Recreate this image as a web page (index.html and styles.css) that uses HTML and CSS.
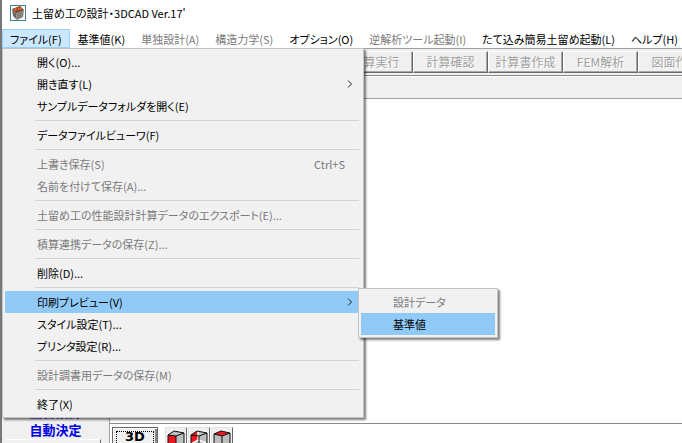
FILE: index.html
```html
<!DOCTYPE html>
<html lang="ja">
<head>
<meta charset="utf-8">
<title>土留め工の設計・3DCAD Ver.17</title>
<link rel="stylesheet" href="styles.css">
</head>
<body>
<div class="window">
  <header class="titlebar">
    <svg class="app-icon" viewBox="0 0 16 16" aria-hidden="true">
      <rect x=".5" y=".5" width="15" height="15" fill="#fff" stroke="#3f8488"/>
      <path d="M2 4 6 8 7 15 3 11Z" fill="#6b6764"/>
      <path d="M6 8 14 5 13 12 7 15Z" fill="#85807a"/>
      <path d="M2 4 10 1 14 5 6 8Z" fill="#713a25"/>
      <path d="M4 4 6 6M6 3 8 6M8 2 10 5M10 2 12 4" stroke="#e2572b" stroke-width="1.2"/>
      <path d="M5 4h1M8 4h1M10 4h1" stroke="#f0ae55"/>
    </svg>
    <h1 class="title">土留め工の設計・3DCAD Ver.17'</h1>
  </header>

  <nav class="menubar">
    <button class="menubar-item open">ファイル(F)</button>
    <button class="menubar-item">基準値(K)</button>
    <button class="menubar-item" disabled>単独設計(A)</button>
    <button class="menubar-item" disabled>構造力学(S)</button>
    <button class="menubar-item">オプション(O)</button>
    <button class="menubar-item" disabled>逆解析ツール起動(I)</button>
    <button class="menubar-item">たて込み簡易土留め起動(L)</button>
    <button class="menubar-item">ヘルプ(H)</button>
  </nav>

  <div class="toolbar">
    <button class="tool" disabled>計算実行</button>
    <button class="tool" disabled>計算確認</button>
    <button class="tool" disabled>計算書作成</button>
    <button class="tool" disabled>FEM解析</button>
    <button class="tool" disabled>図面作成</button>
  </div>
  <div class="caption-bar"></div>

  <main class="workspace">
    <aside class="side">
      <p class="side-title">土留設計<br>自動決定</p>
      <div class="side-box"></div>
    </aside>
    <section class="view">
      <div class="canvas"></div>
      <div class="viewbar">
        <button class="view-3d"><span class="focus">3D</span></button>
        <div class="cubes">
          <button class="cube" aria-label="正面">
            <svg viewBox="0 0 18 18"><path d="M1 5 7 1 17 3V13L9 17 1 15Z" fill="#bbc0bf"/><path d="M1 5 9 6V17L1 15Z" fill="#ec1720"/><path d="M1 5 7 1 17 3V13L9 17 1 15V5L9 6 17 3M9 6V17" fill="none" stroke="#111"/></svg>
          </button>
          <button class="cube" aria-label="背面">
            <svg viewBox="0 0 18 18"><path d="M1 5 7 1 17 3V13L9 17 1 15Z" fill="#bbc0bf"/><path d="M1 5 7 1 9 6V10L1 13Z" fill="#ec1720"/><path d="M1 14 8 10 17 13M8 1V10" fill="none" stroke="#fff" stroke-width="1.500"/><path d="M1 5 7 1 17 3V13L9 17 1 15V5L9 6 17 3M9 6V17" fill="none" stroke="#111"/></svg>
          </button>
          <button class="cube" aria-label="上面">
            <svg viewBox="0 0 18 18"><path d="M1 4 8 1 17 3V13L9 17 1 15Z" fill="#bbc0bf"/><path d="M1 4 8 1 17 3 9 6Z" fill="#ec1720"/><path d="M1 4 8 1 17 3V13L9 17 1 15V4L9 6 17 3M9 6V17" fill="none" stroke="#111"/></svg>
          </button>
        </div>
      </div>
    </section>
  </main>

  <div class="popup file-menu" role="menu">
    <button class="item" role="menuitem">開く(O)...</button>
    <button class="item" role="menuitem">開き直す(L)<svg class="arrow" viewBox="0 0 6 8"><path d="M1 .5 4.500 4 1 7.500"/></svg></button>
    <button class="item" role="menuitem">サンプルデータフォルダを開く(E)</button>
    <hr class="sep">
    <button class="item" role="menuitem">データファイルビューワ(F)</button>
    <hr class="sep">
    <button class="item" role="menuitem" disabled>上書き保存(S)<span class="shortcut">Ctrl+S</span></button>
    <button class="item" role="menuitem" disabled>名前を付けて保存(A)...</button>
    <hr class="sep">
    <button class="item" role="menuitem" disabled>土留め工の性能設計計算データのエクスポート(E)...</button>
    <hr class="sep">
    <button class="item" role="menuitem" disabled>積算連携データの保存(Z)...</button>
    <hr class="sep">
    <button class="item" role="menuitem">削除(D)...</button>
    <hr class="sep">
    <div class="has-sub">
      <button class="item active" role="menuitem">印刷プレビュー(V)<svg class="arrow" viewBox="0 0 6 8"><path d="M1 .5 4.500 4 1 7.500"/></svg></button>
      <div class="popup sub-menu" role="menu">
        <button class="item" role="menuitem" disabled>設計データ</button>
        <button class="item active" role="menuitem">基準値</button>
      </div>
    </div>
    <button class="item" role="menuitem">スタイル設定(T)...</button>
    <button class="item" role="menuitem">プリンタ設定(R)...</button>
    <hr class="sep">
    <button class="item" role="menuitem" disabled>設計調書用データの保存(M)</button>
    <hr class="sep">
    <button class="item" role="menuitem">終了(X)</button>
  </div>
</div>
</body>
</html>
```
FILE: styles.css
```css
* { box-sizing: border-box; }

body {
  margin: 0;
  background: #fff;
  color: #000;
  font: 11px/20px "Noto Sans CJK JP", sans-serif;
  font-feature-settings: "palt";
}

button {
  margin: 0;
  padding: 0;
  border: 0;
  background: none;
  color: inherit;
  font: inherit;
  font-feature-settings: inherit;
  white-space: nowrap;
}

.window {
  position: relative;
  display: flex;
  flex-direction: column;
  height: 100vh;
  overflow: hidden;
  border-left: 2px solid #777;
}

.titlebar {
  display: flex;
  align-items: center;
  gap: 6px;
  height: 29px;
  padding: 0 8px 3px;
}

.app-icon { width: 16px; height: 16px; }

.title { margin: 0; font-size: 11px; font-weight: 400; }

.menubar { display: flex; height: 19px; }

.menubar-item { padding: 0 8px; line-height: 18px; }
.menubar-item.open { background: #cce8ff; box-shadow: inset 0 0 0 1px #99d1ff; }
.menubar-item:disabled { color: #7a7a7a; }

.toolbar {
  display: flex;
  height: 28px;
  padding: 2px 0 2px 336px;
  border-top: 1px solid #a0a0a0;
  border-bottom: 1px solid #888;
  background: #f0f0f0;
}

.tool {
  flex: none;
  width: 75px;
  height: 22px;
  border: 1px solid;
  border-color: #fff #696969 #696969 #fff;
  box-shadow: inset -1px -1px #a8a8a8;
  background: #f0f0f0;
  font-size: 12px;
  line-height: 20px;
}
.tool:disabled { color: #a0a0a0; text-shadow: 1px 1px #fff; }

.caption-bar {
  height: 23px;
  border-top: 1px solid #fff;
  border-bottom: 1px solid #a0a0a0;
  background: #f0f0f0;
}

.workspace { display: flex; flex: 1; min-height: 0; }

.side {
  display: flex;
  flex-direction: column;
  justify-content: flex-end;
  width: 108px;
  border-right: 1px solid #a0a0a0;
  background: #f0f0f0;
}

.side-title {
  margin: 0;
  color: #0000e0;
  font-size: 13px;
  font-weight: 700;
  line-height: 18px;
  text-align: center;
}

.side-box {
  height: 4px;
  margin: 0 8px 0 4px;
  border-top: 1px solid #fff;
  border-right: 1px solid #696969;
}

.view { display: flex; flex: 1; flex-direction: column; }
.canvas { flex: 1; }

.viewbar {
  display: flex;
  gap: 7px;
  height: 20px;
  padding: 3px 2px 0;
  border-top: 1px solid #888;
  overflow: hidden;
}

.view-3d {
  width: 46px;
  height: 22px;
  padding: 3px;
  border: 1px solid #696969;
  box-shadow: inset 1px 1px #fff, inset -2px -2px #888;
  background: #f0f0f0;
  font: 700 13px/14px "DejaVu Sans", sans-serif;
}
.focus { display: block; height: 14px; border: 1px dotted #000; line-height: 10px; }

.cubes { display: flex; gap: 1px; }

.cube {
  width: 22px;
  height: 22px;
  padding: 2px 1px 0;
  border: 1px solid;
  border-color: #e3e3e3 #696969 #696969 #e3e3e3;
  background: #f0f0f0;
}
.cube svg { display: block; width: 18px; height: 18px; }

.popup {
  position: absolute;
  padding: 2px;
  border: 1px solid #c4c4c4;
  background: #f1f1f1;
  box-shadow: 2px 2px 2px rgba(0, 0, 0, .5);
}

.file-menu { top: 48px; left: 0; width: 362px; }

.item {
  display: flex;
  align-items: center;
  width: 100%;
  height: 22px;
  padding: 0 8px 0 32px;
  text-align: left;
}
.item:disabled { color: #7a7a7a; }
.item.active { background: #91c9f7; }

.shortcut { margin-left: auto; padding-right: 8px; }

.arrow { width: 6px; height: 8px; margin-left: auto; fill: none; stroke: #222; }

.sep {
  height: 1px;
  margin: 3px 2px 3px 30px;
  border: 0;
  background: #d3d3d3;
}

.has-sub { position: relative; }
.sub-menu { top: -3px; left: 353px; width: 140px; }
```
